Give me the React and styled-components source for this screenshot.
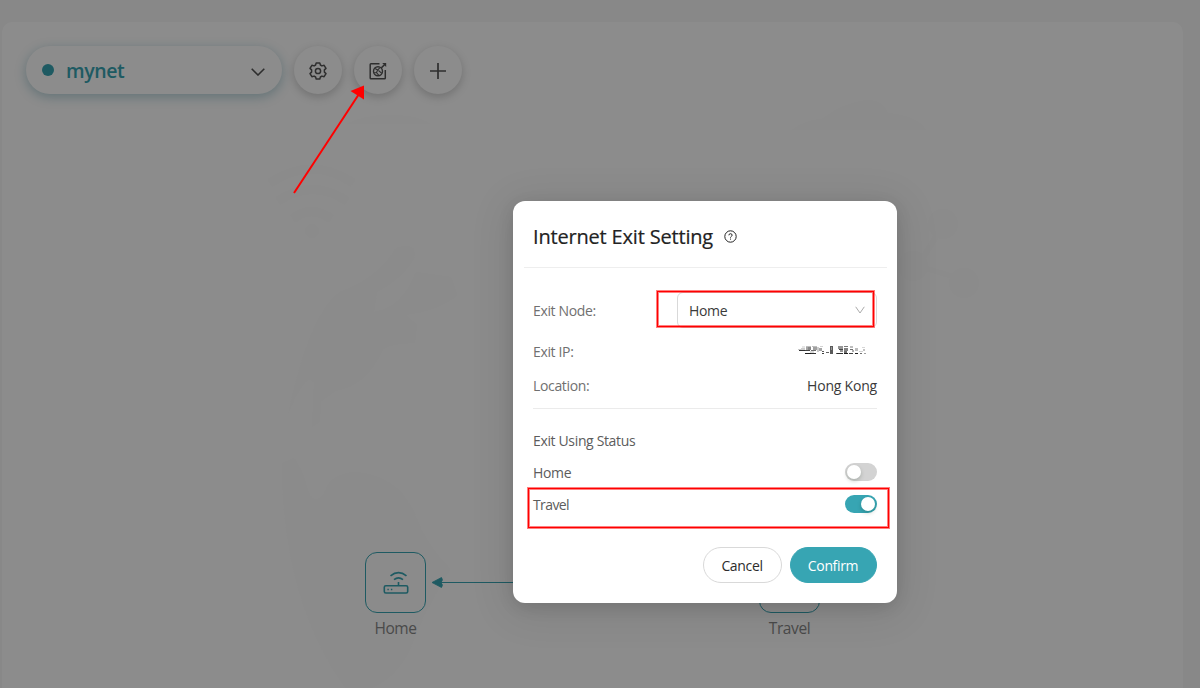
import React from "react";
import styled, { createGlobalStyle } from "styled-components";

const TEAL = "#37a5b3";

const Global = createGlobalStyle`
  *, *::before, *::after { box-sizing: border-box; }
  html, body { margin: 0; height: 100%; overflow: hidden; background: #f7f7f7; }
  body { font-family: "Open Sans", "Noto Sans", sans-serif; font-size: 14px; color: #222; }
  button { font-family: inherit; }
  svg { display: block; flex: none; }
`;

const Page = styled.div`
  position: relative;
  height: 688px;
  padding: 22px 17px 0 2px;
  background: #f7f7f7;
  overflow: hidden;
`;

const Panel = styled.main`
  position: relative;
  height: 680px;
  padding: 24px;
  border-radius: 10px;
  background: #fff;
`;

const Backdrop = styled.svg`
  position: absolute;
  inset: 0;
`;

const Toolbar = styled.header`
  position: relative;
  display: flex;
  gap: 12px;
`;

const NetworkSelect = styled.button`
  display: flex;
  align-items: center;
  width: 256px;
  height: 48px;
  padding: 0 17px 0 16px;
  border: 0;
  border-radius: 24px;
  background: #fff;
  box-shadow: 0 3px 12px rgba(20, 110, 130, 0.32);
  color: ${TEAL};
`;

const Dot = styled.span`
  width: 12px;
  height: 12px;
  border-radius: 50%;
  background: ${TEAL};
`;

const NetworkName = styled.span`
  flex: 1;
  padding: 1px 0 0 12px;
  text-align: left;
  font-size: 19.5px;
  font-weight: 600;
  line-height: 26px;
  letter-spacing: -0.4px;
`;

const SelectArrow = styled.span`
  padding-top: 3px;
`;

const RoundButton = styled.button`
  display: grid;
  place-items: center;
  width: 48px;
  height: 48px;
  padding: 2px 0 0;
  border: 0;
  border-radius: 50%;
  background: #fff;
  color: #555;
  box-shadow: 0 3px 10px rgba(0, 0, 0, 0.2);
`;

const Node = styled.div`
  position: absolute;
  left: ${(p) => p.$x}px;
  top: ${(p) => p.$y}px;
  display: flex;
  flex-direction: column;
  align-items: center;
  width: 61px;
  color: ${TEAL};
`;

const NodeBox = styled.div`
  display: grid;
  place-items: center;
  width: 61px;
  height: 61px;
  border: 1px solid ${TEAL};
  border-radius: 12px;
`;

const NodeLabel = styled.span`
  margin-top: 5px;
  font-size: 15.5px;
  line-height: 20px;
  font-weight: 400;
  letter-spacing: -0.4px;
  color: #888;
`;

const Link = styled.svg`
  position: absolute;
  left: 429px;
  top: 553px;
`;

const Mask = styled.div`
  position: absolute;
  inset: 0;
  display: flex;
  align-items: flex-start;
  justify-content: center;
  padding: 201px 0 0 210px;
  background: rgba(0, 0, 0, 0.45);
`;

const Dialog = styled.section`
  display: flex;
  flex-direction: column;
  width: 384px;
  height: 402px;
  padding: 0 20px;
  border-radius: 12px;
  background: #fff;
  box-shadow: 0 4px 16px rgba(0, 0, 0, 0.1), 0 6px 40px 6px rgba(0, 0, 0, 0.09);
`;

const DialogHeader = styled.div`
  display: flex;
  align-items: center;
  gap: 11px;
  height: 67px;
  margin: 0 -10px 0 -9px;
  padding: 6px 9px 0;
  border-bottom: 1px solid #eee;

  svg {
    margin-bottom: 2px;
  }
`;

const Title = styled.h2`
  margin: 0;
  font-size: 20px;
  font-weight: 500;
  line-height: 28px;
  letter-spacing: -0.18px;
  color: #222;
  -webkit-text-stroke: 0.2px #222;
`;

const Row = styled.div`
  display: flex;
  align-items: center;
  justify-content: space-between;
  height: ${(p) => p.$h}px;
  margin-top: ${(p) => p.$gap || 0}px;
`;

const tones = {
  label: { color: "#707070", weight: 400 },
  status: { color: "#5c5c5c", weight: 400 },
  value: { color: "#3a3a3a", weight: 400 },
};

const Text = styled.span`
  padding-top: 1px;
  font-size: 14px;
  line-height: 21px;
  font-weight: ${(p) => tones[p.$tone].weight};
  letter-spacing: ${(p) => p.$track ?? -0.35}px;
  color: ${(p) => tones[p.$tone].color};
`;

const Select = styled.div`
  display: flex;
  align-items: center;
  justify-content: space-between;
  width: 200px;
  height: 36px;
  padding: 0 11px;
  border: 1px solid #d9d9d9;
  border-radius: 6px;
`;

const Divider = styled.hr`
  width: 100%;
  height: 1px;
  margin: 6px 0 0;
  border: 0;
  background: #ebebeb;
`;

const Switch = styled.span`
  display: flex;
  justify-content: ${(p) => (p.$on ? "flex-end" : "flex-start")};
  width: 32px;
  height: 18px;
  padding: 2px;
  border-radius: 9px;
  background: ${(p) => (p.$on ? TEAL : "#d3d3d3")};
`;

const Knob = styled.span`
  width: 14px;
  height: 14px;
  border-radius: 50%;
  background: #fff;
  box-shadow: 0 2px 4px rgba(0, 35, 11, 0.2);
`;

const Actions = styled.div`
  display: flex;
  justify-content: flex-end;
  gap: 8px;
  margin-top: 27px;
`;

const Button = styled.button`
  width: ${(p) => p.$w}px;
  height: 36px;
  padding: 0 1px 0 0;
  border: 1px solid ${(p) => (p.$primary ? TEAL : "#d9d9d9")};
  border-radius: 18px;
  background: ${(p) => (p.$primary ? TEAL : "#fff")};
  color: ${(p) => (p.$primary ? "#fff" : "#2c2c2c")};
  font-size: 14px;
  letter-spacing: -0.35px;
`;

const Highlight = styled.div`
  position: absolute;
  left: ${(p) => p.$x}px;
  top: ${(p) => p.$y}px;
  width: ${(p) => p.$w}px;
  height: ${(p) => p.$h}px;
  border: 1px solid #ff0000;
  box-shadow: 0 0 0 1px rgba(255, 0, 0, 0.5), inset 0 0 0 1px rgba(255, 0, 0, 0.5);
`;

const Pointer = styled.svg`
  position: absolute;
  left: 280px;
  top: 80px;
`;

const Chevron = ({ w, h, color, stroke }) => (
  <svg width={w} height={h} viewBox={`0 0 ${w} ${h}`} fill="none" stroke={color} strokeWidth={stroke}>
    <path d={`M.7 .8 L${w / 2} ${h - 1} L${w - 0.7} .8`} />
  </svg>
);

const GearIcon = () => (
  <svg width="18" height="18" viewBox="0 0 18 18" fill="none" stroke="currentColor" strokeWidth="1.5" strokeLinejoin="round">
    <path d="M7.2 .9h3.6l.6 2.1 1.5.9 2.2-.6 1.9 3.1-1.6 1.5v2.2l1.6 1.5-1.9 3.1-2.2-.6-1.5.9-.6 2.1H7.2L6.6 15l-1.5-.9-2.2.6L1 11.600l1.600-1.500V7.900L1 6.400l1.900-3.100 2.200.6L6.600 3z" />
    <circle cx="9" cy="9" r="2.6" />
  </svg>
);

const ExitIcon = () => (
  <svg width="18" height="18" viewBox="0 0 18 18" fill="none" stroke="currentColor" strokeWidth="1.5">
    <path d="M10.500 1.700H2q-.8 0-.8.8v13.500q0 .8.8.8h13.500q.8 0 .8-.8V8" />
    <circle cx="9" cy="9.300" r="4.500" strokeWidth="1.400" />
    <path d="M6 6.500l2.700 1.500 2-2.200M8.700 8l-1.200 2.500 2.300 2.800M9.500 8.500l3.300 2.800M7.500 10.500l-2.500.2" strokeWidth="1.100" />
    <path d="M12.300 5.900l3.200-3.200" strokeWidth="1.500" />
    <path d="M13.200 .9H17.200v4z" fill="currentColor" stroke="none" />
  </svg>
);

const PlusIcon = () => (
  <svg width="16" height="16" viewBox="0 0 16 16" stroke="currentColor" strokeWidth="1.700">
    <path d="M8 0v16M0 8h16" />
  </svg>
);

const RouterIcon = () => (
  <svg width="26" height="24" viewBox="0 0 26 24" fill="none" stroke="currentColor" strokeWidth="1.600">
    <rect x="1.300" y="14.800" width="23.400" height="7.200" rx="1.500" />
    <path d="M15.500 15v-4" />
    <path d="M11 8.600q4.500-3.400 9 0M7.500 4.900q8-6.400 16 0" strokeWidth="1.700" />
    <path d="M4.400 18.400h1.400M7.900 18.400h1.400" strokeWidth="1.500" />
  </svg>
);

const HelpIcon = () => (
  <svg width="13" height="13" viewBox="0 0 13 13" fill="none" stroke="#222" strokeWidth="1">
    <circle cx="6.500" cy="6.500" r="5.700" />
    <path d="M4.900 5.300q0-1.600 1.600-1.600t1.600 1.500q0 .8-.9 1.300-.7.400-.7 1.100" />
    <path d="M6.500 8.600v1" />
  </svg>
);

/* x, y, width, height, grey level of each block in the obscured address */
const BLOCKS = [
  [0, 3, 3, 1, 200], [1, 4, 6, 1, 50], [3, 2, 4, 2, 205], [4, 0, 3, 2, 230],
  [8, 0, 5, 1, 190], [8, 1, 5, 3, 165], [10, 1, 3, 3, 135], [7, 7, 6, 1, 30],
  [7, 4, 5, 1, 70], [14, 0, 5, 1, 190], [15, 1, 4, 3, 160], [13, 4, 5, 1, 110], [12, 5, 4, 2, 220],
  [13, 7, 5, 1, 50], [19, 1, 2, 5, 205], [21, 2, 3, 3, 165], [22, 0, 3, 1, 210],
  [24, 5, 2, 1, 90], [24, 7, 2, 1, 60], [28, 6, 3, 1, 100], [32, 0, 3, 8, 90],
  [33, 1, 1, 3, 150], [38, 7, 2, 1, 100], [40, 0, 5, 3, 150], [41, 3, 4, 1, 70],
  [42, 4, 3, 2, 150], [39, 7, 6, 1, 45], [46, 0, 4, 1, 120], [46, 2, 4, 3, 130],
  [46, 5, 3, 2, 110], [46, 7, 4, 1, 30], [52, 0, 3, 2, 190], [52, 3, 3, 1, 110],
  [54, 4, 2, 2, 170], [51, 7, 4, 1, 65], [57, 2, 3, 3, 190], [57, 7, 3, 1, 30],
  [64, 1, 3, 1, 215], [65, 3, 2, 2, 195], [61, 5, 4, 1, 210], [62, 7, 2, 1, 110], [66, 7, 2, 1, 160],
];

const ObscuredAddress = () => (
  <svg width="79" height="10" viewBox="0 0 79 10" shapeRendering="crispEdges">
    {BLOCKS.map(([x, y, w, h, g], i) => (
      <rect key={i} x={x} y={y} width={w} height={h} fill={`rgb(${g},${g},${g})`} />
    ))}
  </svg>
);

const Scenery = () => (
  <Backdrop width="1181" height="666" viewBox="2 22 1181 666" fill="#fdfdfd">
    <path d="M346 124q20-10 48-9 26 1 36 9zM792 130q12-10 30-11 20-16 44-19 17 0 22 13 30 3 38 17z" />
    <g fill="none" stroke="#fdfdfd" strokeWidth="9">
      <path d="M270 183q42-28 83 0M278 201q34-23 69 0M293 219q18-15 38 0" />
      <path d="M940 230l-22 36 50 15" strokeWidth="5" />
    </g>
    <circle cx="312" cy="231" r="7" />
    <circle cx="943" cy="224" r="15" />
    <circle cx="913" cy="266" r="15" />
    <circle cx="964" cy="283" r="15" />
    <path d="M288 415q22-104 54-124 38-14 54-43 22-7 18 10-12 20-37 34l-3 20q30-5 42-40l35 5 6 18q-18 16-52 20l12 10-2 18q-22 0-32 6-18 38-48 42l-14 10-1 20-8 6 2-45q-10-10-26 33z" />
    <path d="M282 463l12-5 10 18q6 34 20 18 6-20 30-22 44 2 62 45 10 28 34 52-30 50-40 80-20 40-60 45-68-90-68-231z" />
  </Backdrop>
);

export default function App() {
  return (
    <>
      <Global />
      <Page>
        <Panel>
          <Scenery />
          <Toolbar>
            <NetworkSelect>
              <Dot />
              <NetworkName>mynet</NetworkName>
              <SelectArrow><Chevron w={14} h={8} color="#555" stroke={1.6} /></SelectArrow>
            </NetworkSelect>
            <RoundButton aria-label="Settings"><GearIcon /></RoundButton>
            <RoundButton aria-label="Internet exit"><ExitIcon /></RoundButton>
            <RoundButton aria-label="Add"><PlusIcon /></RoundButton>
          </Toolbar>
          <Node $x={363} $y={530}>
            <NodeBox><RouterIcon /></NodeBox>
            <NodeLabel>Home</NodeLabel>
          </Node>
          <Link width="330" height="14" viewBox="0 0 330 14" fill={TEAL}>
            <path d="M8 7.500h322" stroke={TEAL} strokeWidth="1.200" />
            <path d="M1 7.500L10.500 2.500Q12.500 5 10 7.500Q12.500 10 10.500 12.500Z" stroke={TEAL} strokeWidth=".8" strokeLinejoin="round" />
          </Link>
          <Node $x={757} $y={530}>
            <NodeBox><RouterIcon /></NodeBox>
            <NodeLabel>Travel</NodeLabel>
          </Node>
        </Panel>
        <Mask>
          <Dialog>
            <DialogHeader>
              <Title>Internet Exit Setting</Title>
              <HelpIcon />
            </DialogHeader>
            <Row $h={36} $gap={24}>
              <Text $tone="label">Exit Node:</Text>
              <Select>
                <Text $tone="value">Home</Text>
                <Chevron w={10} h={8} color="#aaa" stroke={1} />
              </Select>
            </Row>
            <Row $h={34} $gap={6}>
              <Text $tone="label">Exit IP:</Text>
              <ObscuredAddress />
            </Row>
            <Row $h={34}>
              <Text $tone="label">Location:</Text>
              <Text $tone="value" $track={-0.2}>Hong Kong</Text>
            </Row>
            <Divider />
            <Row $h={32} $gap={15}><Text $tone="status">Exit Using Status</Text></Row>
            <Row $h={32}>
              <Text $tone="status">Home</Text>
              <Switch><Knob /></Switch>
            </Row>
            <Row $h={32}>
              <Text $tone="status" $track={-0.6}>Travel</Text>
              <Switch $on><Knob /></Switch>
            </Row>
            <Actions>
              <Button $w={79}>Cancel</Button>
              <Button $w={87} $primary>Confirm</Button>
            </Actions>
          </Dialog>
        </Mask>
        <Highlight $x={657} $y={291} $w={217} $h={36} />
        <Highlight $x={528} $y={488} $w={361} $h={40} />
        <Pointer width="100" height="120" viewBox="280 80 100 120">
          <path d="M294 193L359 94" stroke="#ff0000" strokeWidth="2" />
          <path d="M364 85.500L350.500 91L364 99.500Z" fill="#ff0000" />
        </Pointer>
      </Page>
    </>
  );
}
